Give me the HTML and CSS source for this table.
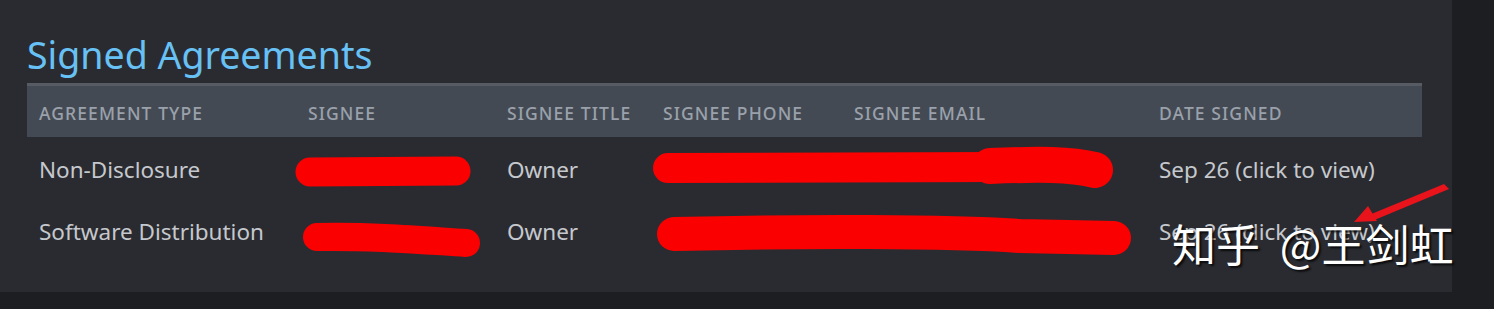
FILE: index.html
```html
<!DOCTYPE html>
<html lang="en">
<head>
<meta charset="utf-8">
<title>Signed Agreements</title>
<link rel="stylesheet" href="styles.css">
</head>
<body>
<div class="page">
  <section class="panel">
    <h2 class="title">Signed Agreements</h2>
    <div class="table">
      <div class="row head">
        <div class="cell">Agreement Type</div>
        <div class="cell">Signee</div>
        <div class="cell">Signee Title</div>
        <div class="cell">Signee Phone</div>
        <div class="cell">Signee Email</div>
        <div class="cell">Date Signed</div>
      </div>
      <div class="body">
        <div class="row">
          <div class="cell">Non-Disclosure</div>
          <div class="cell"></div>
          <div class="cell">Owner</div>
          <div class="cell"></div>
          <div class="cell"></div>
          <div class="cell">Sep 26 (click to view)</div>
        </div>
        <div class="row">
          <div class="cell">Software Distribution</div>
          <div class="cell"></div>
          <div class="cell">Owner</div>
          <div class="cell"></div>
          <div class="cell"></div>
          <div class="cell">Sep 26 (click to view)</div>
        </div>
      </div>
    </div>
  </section>
  <svg class="marks" width="1494" height="309" viewBox="0 0 1494 309" aria-hidden="true">
    <g fill="none" stroke="#fb0000" stroke-linecap="round" stroke-linejoin="round">
      <path d="M310 172 L456 171" stroke-width="29"/>
      <path d="M317 237 C380 236 420 240 466 243" stroke-width="28"/>
      <path d="M668 168 C800 167 900 167 1000 167" stroke-width="30"/>
      <path d="M990 166 C1040 164 1070 164 1095 170" stroke-width="36"/>
      <path d="M674 234 C800 231 950 231 1020 236 L1114 238" stroke-width="34"/>
    </g>
    <polygon points="1444,184 1449,189 1372,221 1369,215" fill="#e8131b"/>
    <polygon points="1354,222 1368,206 1377,221" fill="#e8131b"/>
  </svg>
  <div class="watermark">知乎 @王剑虹</div>
</div>
</body>
</html>
```

FILE: styles.css
```css
html, body {
  margin: 0;
  padding: 0;
  background: #1d1e22;
}
.page {
  position: relative;
  width: 1494px;
  height: 309px;
  overflow: hidden;
}
.panel {
  box-sizing: border-box;
  width: 1452px;
  height: 292px;
  background: #2a2b30;
  padding: 33px 30px 0 27px;
  font-family: "Noto Sans", "Open Sans", sans-serif;
}
.title {
  margin: 0 0 6px;
  font-size: 37.5px;
  line-height: 44px;
  font-weight: 400;
  color: #67c1f5;
}
.table {
  border-top: 3px solid #575b63;
}
.row {
  display: grid;
  grid-template-columns: 269px 199px 156px 191px 305px 275px;
  align-items: center;
  height: 62px;
}
.cell {
  padding-left: 12px;
  white-space: nowrap;
}
.head {
  height: 51px;
  box-sizing: border-box;
  padding-top: 2px;
  background: #444a54;
}
.head .cell {
  font-size: 17.5px;
  font-weight: 500;
  letter-spacing: 1.1px;
  text-transform: uppercase;
  color: #9aa1ab;
}
.body {
  padding-top: 1px;
}
.body .cell {
  font-size: 22.5px;
  color: #c5c8cd;
}
.marks {
  position: absolute;
  left: 0;
  top: 0;
  pointer-events: none;
}
.watermark {
  position: absolute;
  left: 1172px;
  top: 219px;
  font-family: "Noto Sans CJK SC", "Noto Sans", sans-serif;
  font-size: 44px;
  line-height: 48px;
  font-weight: 400;
  word-spacing: 10px;
  color: #ffffff;
  white-space: nowrap;
  text-shadow: 2px 2px 2px rgba(0, 0, 0, 0.75);
}
```
